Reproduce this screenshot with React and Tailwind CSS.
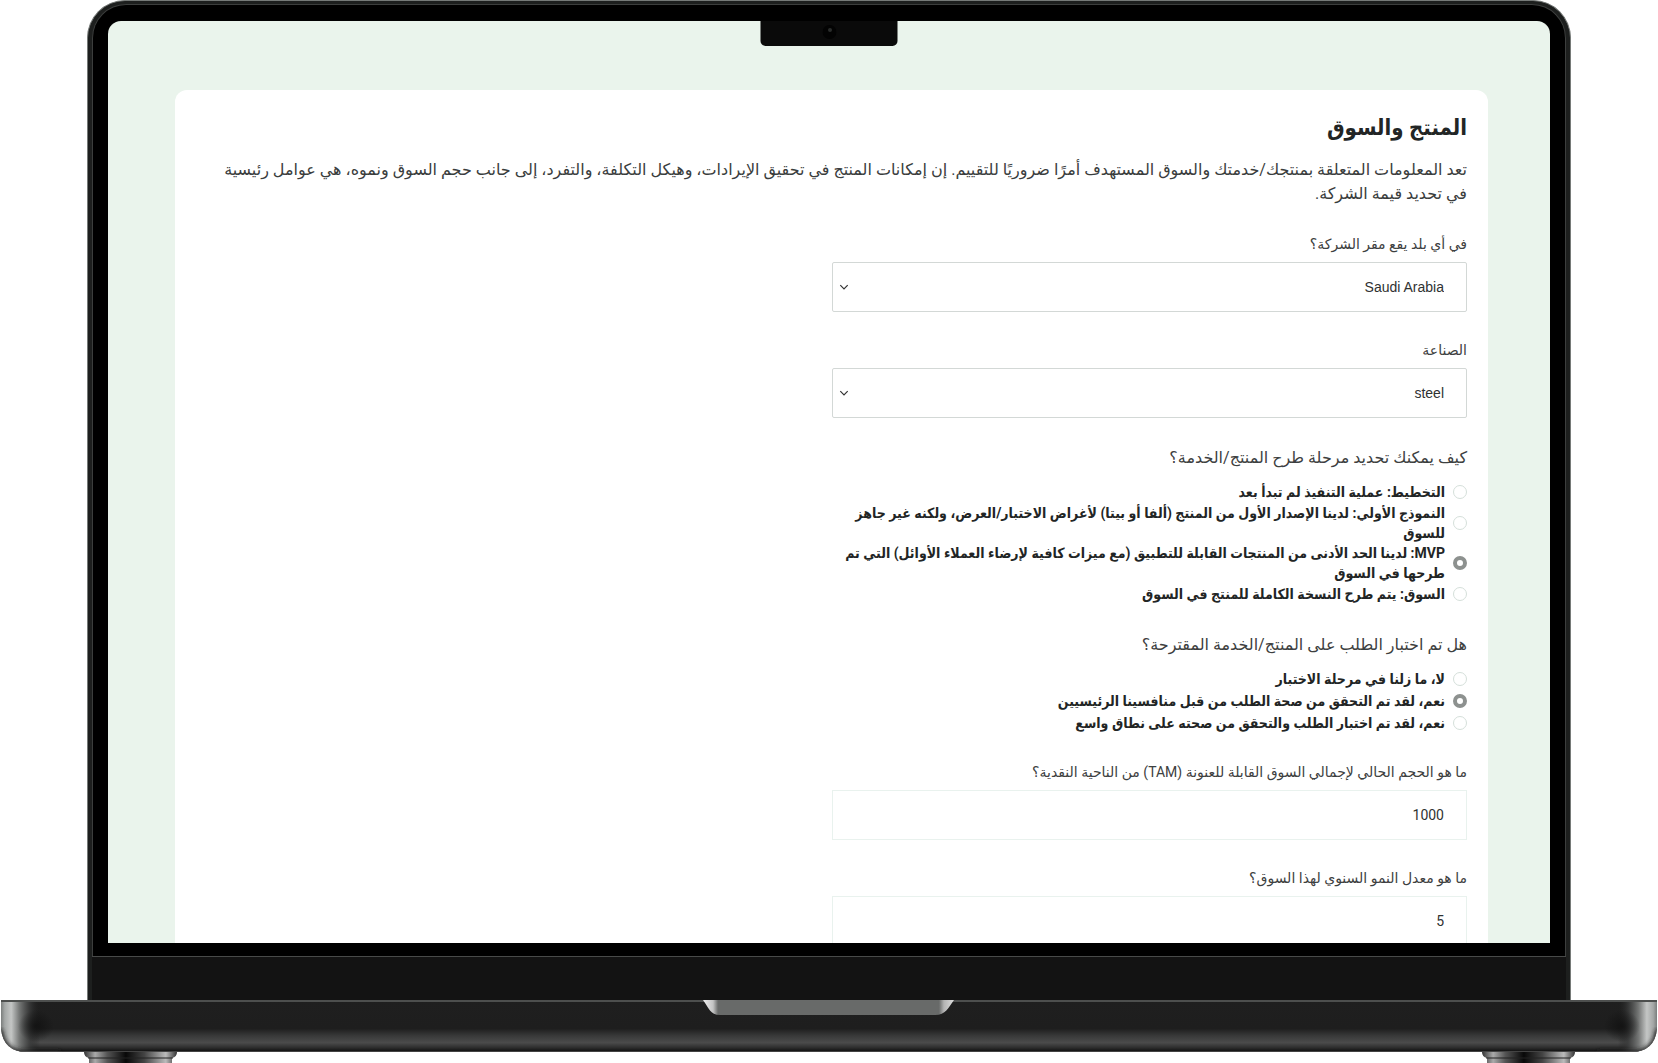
import { useState } from 'react'

const stageOptions = [
  'التخطيط: عملية التنفيذ لم تبدأ بعد',
  'النموذج الأولي: لدينا الإصدار الأول من المنتج (ألفا أو بيتا) لأغراض الاختبار/العرض، ولكنه غير جاهز\nللسوق',
  'MVP: لدينا الحد الأدنى من المنتجات القابلة للتطبيق (مع ميزات كافية لإرضاء العملاء الأوائل) التي تم\nطرحها في السوق',
  'السوق: يتم طرح النسخة الكاملة للمنتج في السوق',
]

const demandOptions = [
  'لا، ما زلنا في مرحلة الاختبار',
  'نعم، لقد تم التحقق من صحة الطلب من قبل منافسينا الرئيسيين',
  'نعم، لقد تم اختبار الطلب والتحقق من صحته على نطاق واسع',
]

function SelectField({ id, label, value, options, onChange }) {
  return (
    <div className="mb-7">
      <label htmlFor={id} className="mb-2 block text-[14px] leading-5 text-[#3d4040]">{label}</label>
      <div className="relative">
        <select
          id={id}
          value={value}
          onChange={event => onChange(event.target.value)}
          className="block h-[50px] w-full appearance-none rounded-xs border border-[#d3d8d6] bg-white px-[22px] font-['Liberation_Sans',sans-serif] text-[14px] text-[#2f3232] outline-none"
        >
          {options.map(option => (
            <option key={option}>{option}</option>
          ))}
        </select>
        <svg className="pointer-events-none absolute top-5 left-[7px] h-2.5 w-2.5" viewBox="0 0 10 10" fill="none" stroke="#333" strokeWidth="1.2">
          <path d="M1.3 3.2 5 6.9 8.7 3.2" />
        </svg>
      </div>
    </div>
  )
}

function RadioGroup({ name, legend, options, value, onChange }) {
  return (
    <fieldset className="mb-7">
      <legend className="mb-[11px] text-[16px] leading-6 text-[#3d4040]">{legend}</legend>
      {options.map((option, index) => (
        <label
          key={option}
          className="flex min-h-[22px] cursor-pointer items-center gap-2 font-[Roboto,'DejaVu_Sans_Condensed','DejaVu_Sans',sans-serif] text-[14px] leading-5 font-bold whitespace-pre-line text-[#222525]"
        >
          <input
            type="radio"
            name={name}
            checked={value === index}
            onChange={() => onChange(index)}
            className="h-3.5 w-3.5 shrink-0 appearance-none rounded-full border border-[#d5dfda] bg-white checked:border-4 checked:border-[#8d918f]"
          />
          <span>{option}</span>
        </label>
      ))}
    </fieldset>
  )
}

function NumberField({ id, label, value, onChange }) {
  return (
    <div className="mb-7">
      <label htmlFor={id} className="mb-2 block text-[14px] leading-5 text-[#3d4040]">{label}</label>
      <input
        id={id}
        type="text"
        inputMode="numeric"
        value={value}
        onChange={event => onChange(event.target.value)}
        className="block h-[50px] w-full border border-[#e9f2ee] bg-white px-[22px] text-[14px] text-[#2f3232] outline-none"
      />
    </div>
  )
}

function LaptopBase() {
  return (
    <svg className="block w-full shrink-0" viewBox="0 0 1658 63" aria-hidden="true">
      <defs>
        <linearGradient id="deck" x1="0" y1="0" x2="0" y2="1">
          <stop offset="0" stopColor="#1f1f1f" />
          <stop offset="0.55" stopColor="#1e1e1e" />
          <stop offset="0.68" stopColor="#373838" />
          <stop offset="0.82" stopColor="#4b4b4b" />
          <stop offset="0.92" stopColor="#2c2c2c" />
          <stop offset="1" stopColor="#0c0c0c" />
        </linearGradient>
        <linearGradient id="edge" x1="0" y1="0" x2="1" y2="0">
          <stop offset="0" stopColor="#6f7271" />
          <stop offset="0.12" stopColor="#a5a8a7" />
          <stop offset="0.28" stopColor="#c4c6c5" />
          <stop offset="0.48" stopColor="#777978" />
          <stop offset="0.75" stopColor="#3a3b3b" stopOpacity="0.8" />
          <stop offset="1" stopColor="#1f1f1f" stopOpacity="0" />
        </linearGradient>
        <radialGradient id="dip">
          <stop offset="0" stopColor="#101010" stopOpacity="0.8" />
          <stop offset="1" stopColor="#101010" stopOpacity="0" />
        </radialGradient>
        <linearGradient id="lip" x1="0" y1="0" x2="1" y2="0">
          <stop offset="0" stopColor="#eee" />
          <stop offset="0.04" stopColor="#c4c4c4" />
          <stop offset="0.06" stopColor="#686a69" />
          <stop offset="0.94" stopColor="#686a69" />
          <stop offset="0.96" stopColor="#b4b4b4" />
          <stop offset="1" stopColor="#ddd" />
        </linearGradient>
        <linearGradient id="foot" x1="0" y1="0" x2="1" y2="0">
          <stop offset="0" stopColor="#333" />
          <stop offset="0.12" stopColor="#aaa" />
          <stop offset="0.25" stopColor="#555" />
          <stop offset="0.45" stopColor="#080808" />
          <stop offset="0.65" stopColor="#444" />
          <stop offset="0.88" stopColor="#bbb" />
          <stop offset="1" stopColor="#333" />
        </linearGradient>
        <filter id="soft">
          <feGaussianBlur stdDeviation="2" />
        </filter>
        <clipPath id="deckShape">
          <path d="M1 0H1657V28Q1655 52 1631 52H27Q3 52 1 28Z" />
        </clipPath>
      </defs>
      <g>
        <path d="M84 52H177Q177 57 172 58V63H89V58Q84 57 84 52Z" fill="url(#foot)" />
        <path d="M1482 52H1575Q1575 57 1570 58V63H1487V58Q1482 57 1482 52Z" fill="url(#foot)" />
        <path d="M88 58H173M1486 58H1571" stroke="#222" />
      </g>
      <g clipPath="url(#deckShape)">
        <rect width="1658" height="52" fill="url(#deck)" />
        <rect width="40" height="52" fill="url(#edge)" />
        <rect width="40" height="52" fill="url(#edge)" transform="matrix(-1 0 0 1 1658 0)" />
        <ellipse cx="36" cy="26" rx="18" ry="16" fill="url(#dip)" />
        <ellipse cx="1622" cy="26" rx="18" ry="16" fill="url(#dip)" />
        <path d="M0 30Q3 53 27 53H60M1658 30Q1655 53 1631 53H1598" fill="none" stroke="#222" strokeWidth="5" filter="url(#soft)" />
        <path d="M0 1H1658" stroke="#4d4f4e" strokeWidth="2" />
        <path d="M0 52H1658" stroke="#777" />
      </g>
      <path d="M703 0H954C948 8 946 15 935 15H720C710 15 709 8 703 0Z" fill="url(#lip)" />
    </svg>
  )
}

export default function App() {
  const [country, setCountry] = useState('Saudi Arabia')
  const [industry, setIndustry] = useState('steel')
  const [stage, setStage] = useState(2)
  const [demand, setDemand] = useState(1)
  const [marketSize, setMarketSize] = useState('1000')
  const [growth, setGrowth] = useState('5')

  return (
    <div className="flex h-screen flex-col overflow-hidden bg-white">
      <div className="mx-[87px] flex min-h-0 flex-1 flex-col overflow-hidden rounded-t-[38px] border border-b-0 border-[#767a78] bg-[#1d1f1e] px-1 pt-[3px]">
        <div className="relative flex min-h-0 flex-1 flex-col rounded-t-[34px] border-x border-t border-[#3c3e3d] bg-black px-[15px] pt-4">
          <div dir="rtl" lang="ar" className="min-h-0 flex-1 overflow-hidden rounded-t-[13px] bg-[#eaf4ec] pt-[69px] pr-[62px] pl-[67px] font-[Roboto,'DejaVu_Sans',sans-serif]">
            <main className="rounded-xl bg-white px-[21px] pt-[22px] pb-16">
              <h1 className="font-[Roboto,'DejaVu_Sans_Condensed','DejaVu_Sans',sans-serif] text-[22px] leading-8 font-bold text-[#222525]">المنتج والسوق</h1>
              <p className="mt-3.5 text-[16px] leading-6 whitespace-pre-line text-[#3a3d3d]">
                {'تعد المعلومات المتعلقة بمنتجك/خدمتك والسوق المستهدف أمرًا ضروريًا للتقييم. إن إمكانات المنتج في تحقيق الإيرادات، وهيكل التكلفة، والتفرد، إلى جانب حجم السوق ونموه، هي عوامل رئيسية\nفي تحديد قيمة الشركة.'}
              </p>
              <form className="mt-7 w-1/2">
                <SelectField id="country" label="في أي بلد يقع مقر الشركة؟" value={country} options={['Saudi Arabia', 'United Arab Emirates', 'Egypt']} onChange={setCountry} />
                <SelectField id="industry" label="الصناعة" value={industry} options={['steel', 'software', 'retail']} onChange={setIndustry} />
                <RadioGroup name="stage" legend="كيف يمكنك تحديد مرحلة طرح المنتج/الخدمة؟" options={stageOptions} value={stage} onChange={setStage} />
                <RadioGroup name="demand" legend="هل تم اختبار الطلب على المنتج/الخدمة المقترحة؟" options={demandOptions} value={demand} onChange={setDemand} />
                <NumberField id="tam" label="ما هو الحجم الحالي لإجمالي السوق القابلة للعنونة (TAM) من الناحية النقدية؟" value={marketSize} onChange={setMarketSize} />
                <NumberField id="growth" label="ما هو معدل النمو السنوي لهذا السوق؟" value={growth} onChange={setGrowth} />
              </form>
            </main>
          </div>
          <div className="absolute top-4 left-1/2 flex h-[25px] w-[137px] -translate-x-1/2 justify-center rounded-b-[5px] bg-[#0a0a0a] pt-1">
            <svg className="h-3.5 w-3.5" viewBox="0 0 14 14">
              <circle cx="7" cy="7" r="7" fill="#030303" />
              <circle cx="7.5" cy="5" r="2" fill="#2b2d2c" />
            </svg>
          </div>
          <div className="h-[13px] shrink-0" />
        </div>
        <div className="h-11 shrink-0 border-t border-[#484a49] bg-[#131313]" />
      </div>
      <LaptopBase />
    </div>
  )
}
